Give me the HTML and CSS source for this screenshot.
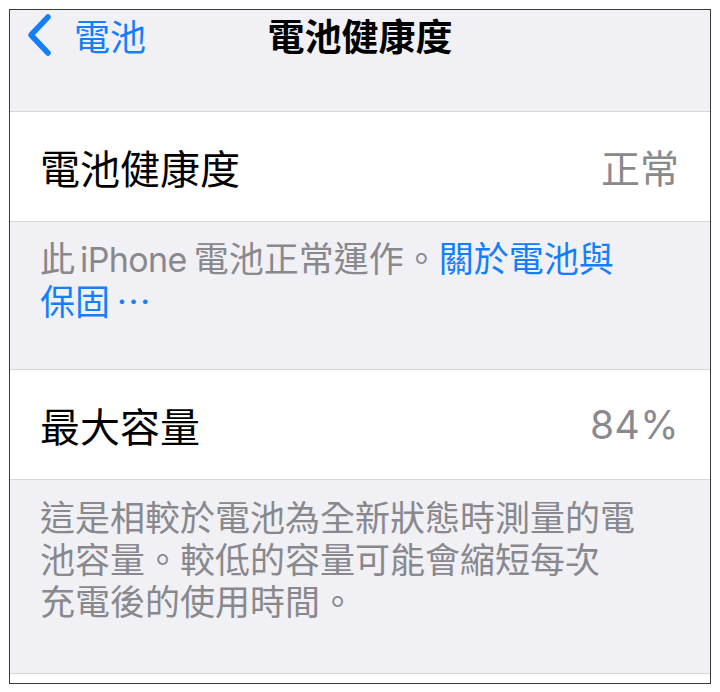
FILE: index.html
```html
<!DOCTYPE html>
<html lang="zh-Hant">
<head>
<meta charset="utf-8">
<title>電池健康度</title>
<link rel="stylesheet" href="styles.css">
</head>
<body>
<div class="frame">
  <header class="nav">
    <div class="nav-bar">
      <a class="back" href="#">
        <svg class="chev" width="26" height="44" viewBox="0 0 26 44"><path d="M21 4 L4 22 L21 40" fill="none" stroke="#157efb" stroke-width="5.5" stroke-linecap="round" stroke-linejoin="round"/></svg>
        <span class="back-label">電池</span>
      </a>
      <h1 class="title">電池健康度</h1>
    </div>
  </header>
  <section class="row">
    <span class="label">電池健康度</span>
    <span class="value">正常</span>
  </section>
  <p class="footer footer-one">此<span class="latin">iPhone</span>電池正常運作。<a class="link" href="#">關於電池與<br>保固<span class="dots">⋯</span></a></p>
  <section class="row">
    <span class="label">最大容量</span>
    <span class="value num">84%</span>
  </section>
  <p class="footer footer-two">這是相較於電池為全新狀態時測量的電<br>池容量。較低的容量可能會縮短每次<br>充電後的使用時間。</p>
  <div class="tail"></div>
</div>
</body>
</html>
```
FILE: styles.css
```css
* { box-sizing: border-box; }
html, body { margin: 0; padding: 0; background: #ffffff; }
body {
  font-family: "Inter", "Noto Sans CJK TC", sans-serif;
  padding: 9px 9px 0 9px;
}
.frame {
  width: 702px;
  height: 675px;
  border: 1px solid #3a3a3a;
  background: #f0f0f5;
  display: flex;
  flex-direction: column;
  overflow: hidden;
}
.nav {
  height: 102px;
  border-bottom: 1px solid #d6d6da;
  flex: none;
}
.nav-bar {
  position: relative;
  height: 50px;
  display: flex;
  align-items: center;
  justify-content: center;
}
.back {
  position: absolute;
  left: 17px;
  top: 3px;
  display: flex;
  align-items: center;
  gap: 21px;
  text-decoration: none;
  color: #157efb;
}
.chev { display: block; }
.back-label {
  font-family: "Noto Sans CJK TC", sans-serif;
  font-size: 36px;
  line-height: 44px;
}
.title {
  margin: 0;
  font-family: "Noto Sans CJK TC", sans-serif;
  font-weight: 700;
  font-size: 37px;
  line-height: 44px;
  color: #000;
}
.row {
  flex: none;
  height: 110px;
  background: #ffffff;
  border-bottom: 1px solid #d6d6da;
  display: flex;
  align-items: center;
  justify-content: space-between;
  padding: 0 31px 0 30px;
}
.label {
  font-family: "Noto Sans CJK TC", sans-serif;
  font-size: 40px;
  color: #000;
  line-height: 1;
}
.value {
  font-family: "Noto Sans CJK TC", sans-serif;
  font-size: 39px;
  color: #8a8a8e;
  line-height: 1;
}
.value.num {
  font-family: "Inter", "Noto Sans CJK TC", sans-serif;
  font-size: 39px;
  letter-spacing: 0.5px;
}
.footer {
  margin: 0;
  flex: none;
  font-family: "Noto Sans CJK TC", sans-serif;
  font-size: 35px;
  color: #88888d;
  padding: 15px 20px 0 30px;
  border-bottom: 1px solid #d6d6da;
}
.latin {
  font-family: "Inter", sans-serif;
  font-size: 34px;
  letter-spacing: -0.6px;
  margin: 0 7px 0 5px;
}
.dots { margin-left: 6px; }
.footer-one { height: 148px; line-height: 40px; }
.footer-two { height: 194px; line-height: 42px; }
.link { color: #157efb; text-decoration: none; }
.tail { flex: 1; background: #ffffff; }
```
